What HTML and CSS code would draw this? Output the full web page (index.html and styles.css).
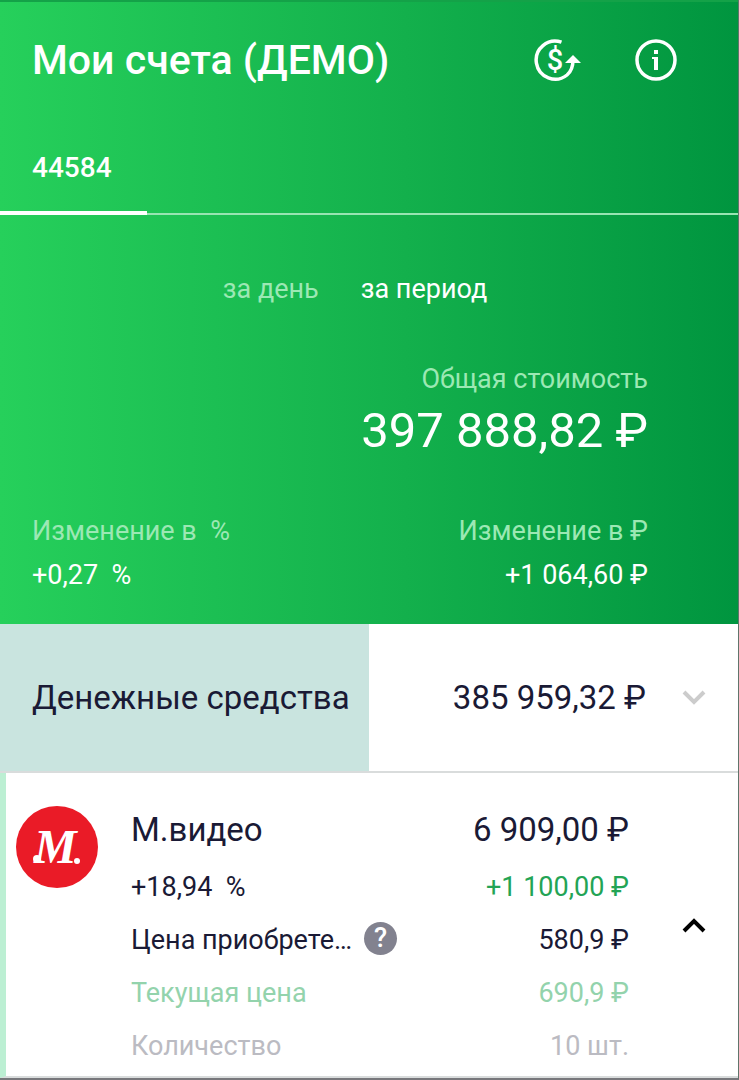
FILE: index.html
```html
<!DOCTYPE html>
<html lang="ru">
<head>
    <meta charset="UTF-8">
    <meta name="viewport" content="width=device-width, initial-scale=1.0">
    <title>Мои счета</title>
    <link rel="stylesheet" href="styles.css">
</head>
<body>

    <header class="header">
        <div class="title-bar">
            <h1>Мои счета (ДЕМО)</h1>
            <div class="actions">
                <button type="button" class="icon-btn" aria-label="Валюта">
                    <svg width="48" height="44" viewBox="0 0 48 44">
                        <path d="M27.500 4.200 A19 19 0 1 0 33 37 Q39 32 39 22" fill="none" stroke="#fff" stroke-width="3.500"/>
                        <path d="M31 25 L39 17 L47 25 Z" fill="#fff"/>
                        <text x="21" y="32" class="dollar">$</text>
                    </svg>
                </button>
                <button type="button" class="icon-btn" aria-label="Информация">
                    <svg width="44" height="44" viewBox="0 0 44 44">
                        <circle cx="22" cy="22" r="19" fill="none" stroke="#fff" stroke-width="3.500"/>
                        <rect x="20" y="12" width="4" height="4" fill="#fff"/>
                        <path d="M18 19 H24 V32 H20 V21 H18 Z" fill="#fff"/>
                    </svg>
                </button>
            </div>
        </div>

        <nav class="accounts">
            <a href="#" class="account active">44584</a>
        </nav>

        <div class="period">
            <button type="button" class="period-btn">за день</button>
            <button type="button" class="period-btn active">за период</button>
        </div>

        <div class="total">
            <p class="label">Общая стоимость</p>
            <p class="total-value">397 888,82 ₽</p>
        </div>

        <div class="changes">
            <div>
                <p class="label">Изменение в &nbsp;%</p>
                <p class="value">+0,27 &nbsp;%</p>
            </div>
            <div class="right">
                <p class="label">Изменение в ₽</p>
                <p class="value">+1 064,60 ₽</p>
            </div>
        </div>
    </header>

    <main>
        <section class="cash">
            <h2 class="cash-name">Денежные средства</h2>
            <p class="cash-value">385 959,32 ₽</p>
            <button type="button" class="toggle" aria-label="Развернуть">
                <svg width="24" height="16" viewBox="0 0 24 16">
                    <path d="M2 2 L12 12 L22 2" fill="none" stroke="#ccc" stroke-width="4"/>
                </svg>
            </button>
        </section>

        <section class="stock">
            <svg class="logo" width="82" height="82" viewBox="0 0 82 82">
                <circle cx="41" cy="41" r="41" fill="#ea1b27"/>
                <circle cx="21" cy="53" r="4" fill="#fff"/>
                <text x="18" y="57" class="logo-letter">M</text>
                <circle cx="61" cy="55" r="3" fill="#fff"/>
            </svg>
            <div class="details">
                <div class="row row-main">
                    <h2>М.видео</h2>
                    <span>6 909,00 ₽</span>
                </div>
                <div class="row">
                    <span>+18,94 &nbsp;%</span>
                    <span class="profit">+1 100,00 ₽</span>
                </div>
                <div class="row">
                    <span class="with-help">Цена приобрете…
                        <button type="button" class="help" aria-label="Справка">?</button>
                    </span>
                    <span>580,9 ₽</span>
                </div>
                <div class="row current">
                    <span>Текущая цена</span>
                    <span>690,9 ₽</span>
                </div>
                <div class="row muted">
                    <span>Количество</span>
                    <span>10 шт.</span>
                </div>
            </div>
            <button type="button" class="toggle" aria-label="Свернуть">
                <svg width="24" height="16" viewBox="0 0 24 16">
                    <path d="M2 14 L12 4 L22 14" fill="none" stroke="#000" stroke-width="4"/>
                </svg>
            </button>
        </section>
    </main>

</body>
</html>
```
FILE: styles.css
```css
* {
    box-sizing: border-box;
}

body {
    font-family: Roboto, sans-serif;
    margin: 0;
    min-height: 100vh;
    font-size: 27px;
    line-height: 32px;
    color: #1a1a35;
    background-color: #fff;
    border-right: 1px solid #60756b;
    border-bottom: 2px solid #77777b;
}

h1, h2, p {
    margin: 0;
    font-weight: 400;
}

button {
    font: inherit;
    color: inherit;
    background: none;
    border: none;
    padding: 0;
    cursor: pointer;
}

svg {
    display: block;
}

/* Green header */
.header {
    color: #fff;
    background: linear-gradient(90deg, #26d05b, #13b04c 55%, #00953f);
    border-top: 2px solid #14a248;
    padding-bottom: 33px;
}

.title-bar {
    display: flex;
    justify-content: space-between;
    align-items: center;
    height: 116px;
    padding: 0 60px 0 32px;
}

h1 {
    font-size: 41px;
    line-height: 48px;
    font-weight: 500;
}

.actions {
    display: flex;
    gap: 52px;
}

.dollar {
    font-size: 29px;
    font-weight: 500;
    fill: #fff;
    text-anchor: middle;
}

.accounts {
    display: flex;
    height: 97px;
    border-bottom: 2px solid #98e4b2;
}

.account {
    width: 147px;
    height: 97px;
    padding: 34px 32px;
    color: #fff;
    font-size: 28px;
    font-weight: 500;
    text-decoration: none;
}

.account.active {
    border-bottom: 4px solid #fff;
}

.period {
    display: flex;
    justify-content: center;
    gap: 42px;
    padding-top: 58px;
    padding-right: 28px;
}

.period-btn {
    color: #9ce8b4;
}

.period-btn.active {
    color: #fff;
}

.total {
    padding: 58px 90px 0 32px;
    text-align: right;
}

.label {
    color: #9ce8b4;
}

.total-value {
    font-size: 49px;
    line-height: 64px;
    padding-top: 4px;
}

.changes {
    display: flex;
    justify-content: space-between;
    padding: 52px 90px 0 32px;
}

.value {
    padding-top: 12px;
}

.right {
    text-align: right;
}

/* Cash row */
.cash {
    display: flex;
    align-items: center;
    height: 149px;
    font-size: 33px;
    line-height: 40px;
    border-bottom: 2px solid #d9dcdc;
}

.cash-name {
    width: 50%;
    height: 100%;
    display: flex;
    align-items: center;
    padding-left: 32px;
    font-size: 33px;
    white-space: nowrap;
    background-color: #c9e4df;
}

.cash-value {
    flex: 1;
    text-align: right;
}

.toggle {
    flex: none;
    margin: 0 32px 0 36px;
}

/* Stock row */
.stock {
    display: flex;
    align-items: center;
    padding-left: 10px;
    border-left: 6px solid #bcefd3;
    border-bottom: 2px solid #d9dcdc;
}

.logo {
    flex: none;
    align-self: flex-start;
    margin-top: 33px;
}

.logo-letter {
    font-family: "Liberation Serif", serif;
    font-size: 48px;
    font-weight: 700;
    font-style: italic;
    fill: #fff;
}

.details {
    flex: 1;
    display: flex;
    flex-direction: column;
    gap: 21px;
    padding: 37px 0 14px 33px;
}

.row {
    display: flex;
    justify-content: space-between;
}

.row-main, .row-main h2 {
    font-size: 33px;
    line-height: 40px;
}

.stock .toggle {
    margin-left: 53px;
}

.with-help {
    display: flex;
    gap: 12px;
}

.help {
    width: 33px;
    height: 33px;
    margin: -2px 0;
    border-radius: 50%;
    color: #fff;
    background-color: #82828f;
    font-weight: 500;
    line-height: 33px;
}

.profit {
    color: #23a455;
}

.current {
    color: #93d3ac;
}

.muted {
    color: #bbbbc2;
}
```
